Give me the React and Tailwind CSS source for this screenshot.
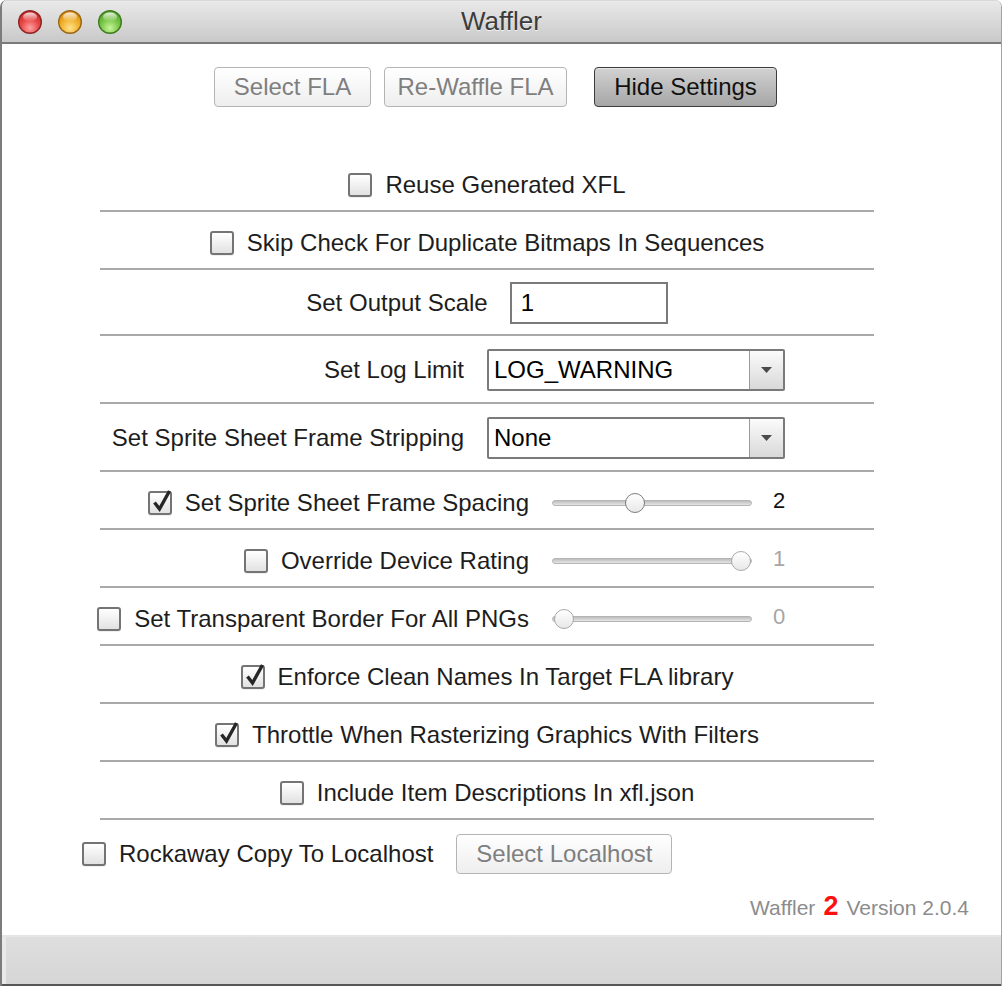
import React from "react"

function Light({ id, rim, dark, mid, light }) {
  return (
    <svg width="26" height="26" viewBox="0 0 26 26">
      <defs>
        <radialGradient id={id} cx="0.5" cy="0.78" r="0.75">
          <stop offset="0" stopColor={light} />
          <stop offset="0.55" stopColor={mid} />
          <stop offset="1" stopColor={dark} />
        </radialGradient>
        <linearGradient id={id + "g"} x1="0" y1="0" x2="0" y2="1">
          <stop offset="0" stopColor="#fff" stopOpacity="0.85" />
          <stop offset="1" stopColor="#fff" stopOpacity="0" />
        </linearGradient>
      </defs>
      <circle cx="13" cy="13" r="12" fill={rim} />
      <circle cx="13" cy="13" r="10.6" fill={`url(#${id})`} />
      <ellipse cx="13" cy="8" rx="7" ry="4.6" fill={`url(#${id + "g"})`} />
    </svg>
  )
}

function Checkbox({ checked }) {
  return (
    <div className="relative w-[24px] h-[24px] shrink-0 rounded-[3px] border-2 border-[#747474] bg-linear-to-b from-white to-[#e2e2e2] shadow-[0_1px_0_#f0f0f0]">
      {checked && (
        <svg className="absolute left-[1px] top-[-5px]" width="22" height="26" viewBox="0 0 22 26">
          <polyline points="3.5,14.5 8.5,21 18.5,3" fill="none" stroke="#262626" strokeWidth="3.4" strokeLinejoin="miter" />
        </svg>
      )}
    </div>
  )
}

function Button({ children, primary, className = "" }) {
  return (
    <div
      className={
        "h-[40px] flex items-center justify-center rounded-[4px] border text-[24px] whitespace-nowrap " +
        (primary
          ? "border-[#3c3c3c] bg-linear-to-b from-[#d2d2d2] to-[#a6a6a6] text-[#111] shadow-[inset_0_1px_0_#e6e6e6] "
          : "border-[#b4b4b4] bg-linear-to-b from-white to-[#eeeeee] text-[#7f7f7f] ") +
        className
      }
    >
      {children}
    </div>
  )
}

function CheckRow({ checked, label }) {
  return (
    <div className="h-[58px] pt-[6px] border-b-2 border-[#a9a9a9] flex items-center justify-center gap-[13px]">
      <Checkbox checked={checked} />
      <span className="text-[24px] whitespace-nowrap">{label}</span>
    </div>
  )
}

function Select({ value }) {
  return (
    <div className="ml-[23px] w-[298px] h-[42px] flex border-2 border-[#7a7a7a] bg-white rounded-[2px]">
      <div className="flex-1 flex items-center pl-[5px] text-[24px] text-black">{value}</div>
      <div className="w-[34px] flex items-center justify-center border-l border-[#9a9a9a] bg-linear-to-b from-[#fbfbfb] to-[#d9d9d9]">
        <svg width="11" height="7" viewBox="0 0 11 7">
          <polygon points="0,0 11,0 5.5,6" fill="#4a4a4a" />
        </svg>
      </div>
    </div>
  )
}

function SelectRow({ label, value }) {
  return (
    <div className="h-[68px] pt-[2px] border-b-2 border-[#a9a9a9] flex items-center">
      <div className="w-[364px] flex justify-end text-[24px] whitespace-nowrap">{label}</div>
      <Select value={value} />
    </div>
  )
}

function Slider({ pos, dim }) {
  return (
    <div className="ml-[23px] w-[200px] shrink-0 flex items-center">
      <div className="w-full h-[6px] rounded-full border border-[#b5b5b5] bg-linear-to-b from-[#bdbdbd] to-[#e6e6e6] flex items-center">
        <div className="shrink-0" style={{ width: pos }} />
        <div
          className={
            "w-[20px] h-[20px] shrink-0 -ml-[10px] rounded-full border bg-linear-to-b from-white to-[#e8e8e8] " +
            (dim ? "border-[#a9a9a9]" : "border-[#7d7d7d]")
          }
        />
      </div>
    </div>
  )
}

function SliderRow({ checked, label, pos, value, dim }) {
  return (
    <div className="h-[58px] pt-[6px] border-b-2 border-[#a9a9a9] flex items-center">
      <div className="w-[429px] shrink-0 flex justify-end items-center gap-[13px]">
        <Checkbox checked={checked} />
        <span className="text-[24px] whitespace-nowrap shrink-0">{label}</span>
      </div>
      <Slider pos={pos} dim={dim} />
      <span className={"ml-[21px] text-[22px] -mt-[6px] " + (dim ? "text-[#a6a6a6]" : "text-[#111]")}>{value}</span>
    </div>
  )
}

export default function App() {
  return (
    <div className="w-[1002px] h-[986px] flex flex-col bg-white overflow-hidden font-['Liberation_Sans',Arial,sans-serif] text-[#1d1d1d] border-l-2 border-l-[#7c7c7c] border-r border-r-[#a3a3a3] rounded-t-[7px]">
      {/* title bar */}
      <div className="h-[44px] shrink-0 grid grid-cols-[1fr_auto_1fr] items-center bg-linear-to-b from-[#e9e9e9] to-[#c9c9c9] border-b-2 border-[#7a7a7a] border-t border-t-[#d8d8d8]">
        <div className="flex items-center gap-[14px] pl-[15px]">
          <Light id="r" rim="#8e2323" dark="#c92a2a" mid="#e94a4a" light="#ffa3a3" />
          <Light id="y" rim="#9a6512" dark="#d98f10" mid="#f1b330" light="#ffe38e" />
          <Light id="g" rim="#3e7a1e" dark="#58a62c" mid="#7cc84a" light="#c8f59a" />
        </div>
        <div className="text-[26px] text-[#3b3b3b] [text-shadow:0_1px_0_#f2f2f2]">Waffler</div>
        <div />
      </div>

      {/* body */}
      <div className="flex-1 flex flex-col">
        <div className="flex pt-[23px] pl-[212px]">
          <Button className="w-[157px]">Select FLA</Button>
          <Button className="w-[183px] ml-[13px]">Re-Waffle FLA</Button>
          <Button primary className="w-[183px] ml-[27px]">Hide Settings</Button>
        </div>

        <div className="mt-[47px] ml-[98px] w-[774px] flex flex-col">
          <CheckRow label="Reuse Generated XFL" />
          <CheckRow label="Skip Check For Duplicate Bitmaps In Sequences" />
          <div className="h-[66px] pt-[2px] border-b-2 border-[#a9a9a9] flex items-center justify-center gap-[22px]">
            <span className="text-[24px]">Set Output Scale</span>
            <div className="w-[158px] h-[42px] border-2 border-[#7a7a7a] flex items-center pl-[9px] text-[24px] text-black">1</div>
          </div>
          <SelectRow label="Set Log Limit" value="LOG_WARNING" />
          <SelectRow label="Set Sprite Sheet Frame Stripping" value="None" />
          <SliderRow checked label="Set Sprite Sheet Frame Spacing" pos="82px" value="2" />
          <SliderRow label="Override Device Rating" pos="188px" value="1" dim />
          <SliderRow label="Set Transparent Border For All PNGs" pos="11px" value="0" dim />
          <CheckRow checked label="Enforce Clean Names In Target FLA library" />
          <CheckRow checked label="Throttle When Rasterizing Graphics With Filters" />
          <CheckRow label="Include Item Descriptions In xfl.json" />
        </div>

        <div className="h-[66px] pt-[2px] flex items-center pl-[80px]">
          <Checkbox />
          <span className="ml-[13px] text-[24px] whitespace-nowrap">Rockaway Copy To Localhost</span>
          <Button className="w-[216px] ml-[23px]">Select Localhost</Button>
        </div>

        <div className="flex justify-end items-baseline pr-[32px] text-[21px] text-[#8c8c8c]">
          <span>Waffler</span>
          <span className="mx-[8px] text-[27px] font-bold text-[#ff1010]">2</span>
          <span>Version 2.0.4</span>
        </div>
      </div>

      {/* bottom bar */}
      <div className="h-[51px] shrink-0 border-t-2 border-t-[#e6e6e6] border-b-2 border-b-[#565656] bg-linear-to-b from-[#dedede] to-[#d6d6d6] shadow-[inset_4px_0_0_#e9e9e9]" />
    </div>
  )
}
